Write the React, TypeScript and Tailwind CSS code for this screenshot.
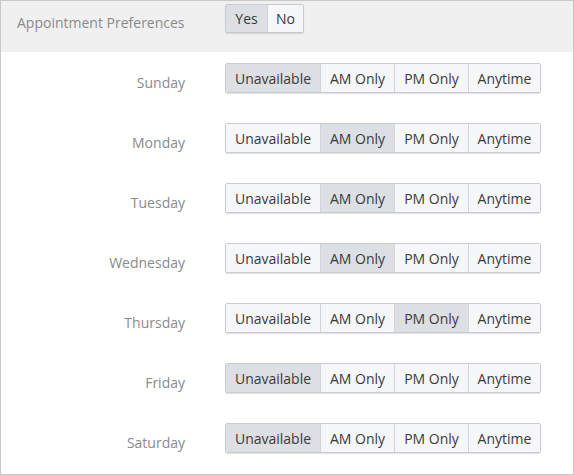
import { useState } from 'react'

const DAYS = ['Sunday', 'Monday', 'Tuesday', 'Wednesday', 'Thursday', 'Friday', 'Saturday']
const OPTIONS = [
  { label: 'Unavailable', w: 'w-[94px]' },
  { label: 'AM Only', w: 'w-[74px]' },
  { label: 'PM Only', w: 'w-[74px]' },
  { label: 'Anytime', w: 'w-[72px]' },
]

const initial: Record<string, string> = {
  Sunday: 'Unavailable',
  Monday: 'AM Only',
  Tuesday: 'AM Only',
  Wednesday: 'AM Only',
  Thursday: 'PM Only',
  Friday: 'Unavailable',
  Saturday: 'Unavailable',
}

function Segment({
  items,
  value,
  onChange,
  height,
}: {
  items: { label: string; w: string }[]
  value: string
  onChange: (v: string) => void
  height: string
}) {
  return (
    <div className={`flex ${height} rounded-[2px] border border-[#c9cbce] shadow-[0_1px_1px_rgba(0,0,0,0.12)] overflow-hidden`}>
      {items.map((it, i) => (
        <button
          key={it.label}
          onClick={() => onChange(it.label)}
          className={`${it.w} flex items-center justify-center text-[14px] text-[#3a3a3a] ${
            i > 0 ? 'border-l border-[#d3d5d8]' : ''
          } ${value === it.label ? 'bg-[#dcdfe3]' : 'bg-[#f6f7f8]'}`}
        >
          {it.label}
        </button>
      ))}
    </div>
  )
}

export default function App() {
  const [pref, setPref] = useState('Yes')
  const [days, setDays] = useState(initial)

  return (
    <div
      className="w-[574px] h-[475px] border border-[#c8c8c8] bg-white"
      style={{ fontFamily: '"Open Sans", "Liberation Sans", sans-serif' }}
    >
      {/* Header */}
      <div className="flex h-[51px] bg-[#f0f0f0] pt-[3px]">
        <div className="w-[224px] pl-[16px] pt-[8px] text-[14px] text-[#8a8a8a]">Appointment Preferences</div>
        <Segment
          items={[
            { label: 'Yes', w: 'w-[41px]' },
            { label: 'No', w: 'w-[36px]' },
          ]}
          value={pref}
          onChange={setPref}
          height="h-[29px]"
        />
      </div>

      {/* Days */}
      <div className="flex flex-col">
        {DAYS.map((d) => (
          <div key={d} className="flex h-[60px] pt-[11px]">
            <div className="w-[184px] pt-[9px] text-right text-[14px] text-[#8a8a8a]">{d}</div>
            <div className="ml-[40px]">
              <Segment
                items={OPTIONS}
                value={days[d]}
                onChange={(v) => setDays({ ...days, [d]: v })}
                height="h-[30px]"
              />
            </div>
          </div>
        ))}
      </div>
    </div>
  )
}
